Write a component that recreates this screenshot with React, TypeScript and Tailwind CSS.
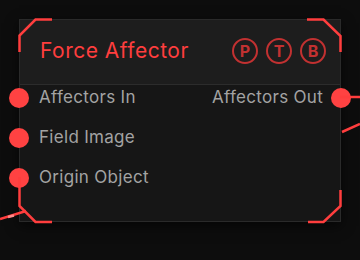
import React from "react";

const RED = "#ff3e3e";

function Socket({ side }: { side: "left" | "right" }) {
  return (
    <div
      className={`w-[20px] h-[20px] rounded-full bg-[#ff4242] shrink-0 ${
        side === "left" ? "-ml-[11px]" : "-mr-[11px]"
      }`}
    />
  );
}

function Badge({ letter }: { letter: string }) {
  return (
    <div className="w-[26px] h-[26px] rounded-full border-2 border-[#c23131] flex items-center justify-center text-[16px] font-bold text-[#c23131] leading-none">
      {letter}
    </div>
  );
}

export default function App() {
  const inputs = ["Affectors In", "Field Image", "Origin Object"];

  return (
    <div
      className="relative w-[360px] h-[260px] bg-[#0d0d0d] overflow-hidden"
      style={{ fontFamily: "Inter, 'Noto Sans', sans-serif" }}
    >
      <div className="ml-[19px] mt-[19px] w-[322px] h-[203px] bg-[#161616] border border-[#2a2a2a] flex flex-col shadow-[0_4px_12px_rgba(0,0,0,0.6)]">
        {/* Header */}
        <div className="h-[65px] bg-[#1d1d1d] border-b border-[#2c2c2c] flex items-center justify-between pl-[20px] pr-[14px] pb-[3px]">
          <span className="text-[21px] tracking-[0.5px] text-[#ff3e3e] leading-none">Force Affector</span>
          <div className="flex gap-[8px]">
            <Badge letter="P" />
            <Badge letter="T" />
            <Badge letter="B" />
          </div>
        </div>

        {/* Rows */}
        <div className="flex flex-col gap-[16px] pt-[1px]">
          {inputs.map((label, i) => (
            <div key={label} className="h-[24px] flex items-center justify-between">
              <div className="flex items-center gap-[10px]">
                <Socket side="left" />
                <span className="text-[17px] tracking-[0.3px] text-[#a3a3a3]">{label}</span>
              </div>
              {i === 0 && (
                <div className="flex items-center gap-[8px]">
                  <span className="text-[17px] tracking-[0.3px] text-[#a3a3a3]">Affectors Out</span>
                  <Socket side="right" />
                </div>
              )}
            </div>
          ))}
        </div>
      </div>

      {/* Corner brackets and wires */}
      <svg
        className="absolute inset-0 pointer-events-none"
        width="360"
        height="260"
        viewBox="0 0 360 260"
        fill="none"
        stroke={RED}
        strokeWidth="2.5"
      >
        <path d="M19.5 52 V35.5 L35.5 19.5 H52" />
        <path d="M307 19.5 H323.5 L340.5 36 V52" />
        <path d="M340.5 190 V206 L323.5 222 H308" />
        <path d="M19.5 177 V206 L35.5 222 H52" />
        <path d="M340 97 H360" />
        <path d="M342 132 L360 124" />
        <path d="M0 219 L26 211" />
        <path d="M8 217 L14 215.5" stroke="#ff8a8a" />
      </svg>
    </div>
  );
}
